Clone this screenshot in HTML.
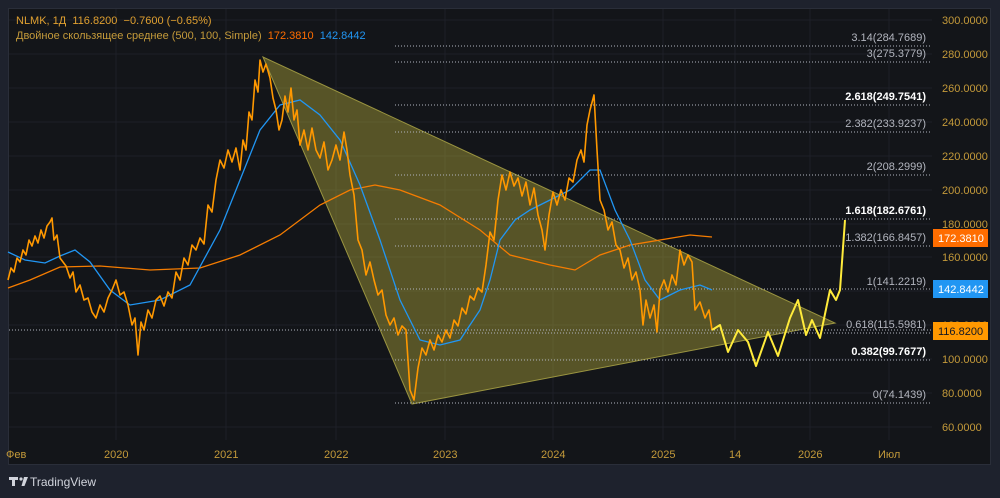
<!DOCTYPE html><html><head><style>
body{margin:0;width:1000px;height:498px;background:#1e222d;overflow:hidden;font-family:"Liberation Sans",sans-serif}
#p{position:absolute;left:8px;top:8px;width:983px;height:457px;background:#131519;border:1px solid #2a2e39;box-sizing:border-box}
.t{position:absolute;font-size:11px;white-space:nowrap}
</style></head><body>
<div id="p"></div>
<svg width="1000" height="498" style="position:absolute;left:0;top:0">
<g stroke="#1e2027" stroke-width="1">
<line x1="116" y1="9" x2="116" y2="440"/><line x1="226" y1="9" x2="226" y2="440"/><line x1="336" y1="9" x2="336" y2="440"/><line x1="445" y1="9" x2="445" y2="440"/><line x1="553" y1="9" x2="553" y2="440"/><line x1="663" y1="9" x2="663" y2="440"/><line x1="735" y1="9" x2="735" y2="440"/><line x1="810" y1="9" x2="810" y2="440"/><line x1="889" y1="9" x2="889" y2="440"/>
<line x1="9" y1="20" x2="932" y2="20"/><line x1="9" y1="54" x2="932" y2="54"/><line x1="9" y1="88" x2="932" y2="88"/><line x1="9" y1="122" x2="932" y2="122"/><line x1="9" y1="156" x2="932" y2="156"/><line x1="9" y1="190" x2="932" y2="190"/><line x1="9" y1="224" x2="932" y2="224"/><line x1="9" y1="257" x2="932" y2="257"/><line x1="9" y1="291" x2="932" y2="291"/><line x1="9" y1="325" x2="932" y2="325"/><line x1="9" y1="359" x2="932" y2="359"/><line x1="9" y1="393" x2="932" y2="393"/><line x1="9" y1="427" x2="932" y2="427"/>
</g>
<polygon points="263,57 412,404 835,323" fill="rgba(190,180,60,0.4)" stroke="#9a9440" stroke-width="1"/>
<g stroke="#b2b5be" stroke-width="1" stroke-dasharray="1,2">
<line x1="395" y1="46" x2="932" y2="46"/><line x1="395" y1="62" x2="932" y2="62"/><line x1="395" y1="105" x2="932" y2="105"/><line x1="395" y1="132" x2="932" y2="132"/><line x1="395" y1="175" x2="932" y2="175"/><line x1="395" y1="219" x2="932" y2="219"/><line x1="395" y1="246" x2="932" y2="246"/><line x1="395" y1="289" x2="932" y2="289"/><line x1="395" y1="333" x2="932" y2="333"/><line x1="395" y1="360" x2="932" y2="360"/><line x1="395" y1="403" x2="932" y2="403"/><line x1="9" y1="330" x2="932" y2="330"/>
</g>
<polyline fill="none" stroke="#f57c00" stroke-width="1.3" points="8,288 30,280 60,267 100,266 150,270 200,268 240,255 280,235 320,205 350,190 375,185 400,190 440,205 480,230 510,255 550,265 575,270 600,255 630,245 660,240 690,235 712,237"/>
<polyline fill="none" stroke="#2196f3" stroke-width="1.3" points="8,252 25,260 45,263 60,256 75,250 90,262 110,290 130,305 160,300 190,285 220,230 240,180 260,130 280,105 300,100 320,115 340,140 360,185 380,240 400,300 420,340 440,345 460,340 480,310 490,280 500,240 515,220 530,210 550,200 570,190 590,170 600,170 615,210 630,240 645,280 660,300 680,290 700,285 712,290"/>
<polyline fill="none" stroke="#ff9800" stroke-width="1.6" stroke-linejoin="round" points="8,280 11,268 14,272 17,258 20,262 23,250 26,255 29,240 32,246 35,236 38,243 41,230 44,238 47,226 50,222 52,218 54,240 57,235 60,258 63,262 66,266 70,278 73,272 76,292 80,285 84,300 88,298 92,312 96,318 100,305 104,312 108,298 112,290 116,280 120,295 124,292 128,305 132,325 135,318 138,355 141,322 144,330 148,310 152,318 156,300 160,296 164,306 168,292 172,298 176,272 180,280 184,258 188,265 192,245 196,250 200,238 204,244 208,205 212,212 216,180 220,160 224,168 228,150 232,162 236,148 240,170 243,140 246,150 249,112 252,120 255,80 258,92 260,60 263,72 266,64 270,78 273,98 276,110 279,130 282,120 285,96 288,112 291,88 294,120 297,110 300,145 304,130 308,150 312,128 316,150 320,158 324,142 328,170 332,160 336,145 340,160 344,132 347,150 350,175 354,195 358,240 362,250 366,275 370,262 374,280 378,295 382,290 386,315 390,325 394,318 398,335 402,326 406,330 410,390 414,400 418,368 422,348 426,355 430,340 434,350 438,335 442,342 446,330 450,338 454,320 458,326 462,308 466,314 470,296 474,300 478,288 482,292 486,265 490,232 494,240 498,200 502,175 506,190 510,172 514,186 518,178 522,196 526,182 530,205 534,188 538,215 542,230 545,250 549,215 553,192 557,205 561,190 565,200 569,178 573,182 577,160 581,150 584,162 587,125 590,110 594,95 597,150 600,200 604,210 608,230 612,222 616,245 620,250 624,268 628,258 632,280 636,272 640,290 643,325 646,300 650,318 654,305 657,332 660,290 664,280 668,292 672,275 676,285 680,250 684,265 688,255 692,262 695,310 700,302 705,318 709,310 712,330"/>
<polyline fill="none" stroke="#ffeb3b" stroke-width="2" stroke-linejoin="round" points="712,330 720,325 728,352 738,330 748,342 756,366 768,332 778,356 790,318 798,300 806,335 812,320 820,338 830,290 836,300 840,290 845,220"/>
<g font-family="Liberation Sans" font-size="11" fill="#c49a3a">
<text x="942" y="24">300.0000</text><text x="942" y="58">280.0000</text><text x="942" y="92">260.0000</text><text x="942" y="126">240.0000</text><text x="942" y="160">220.0000</text><text x="942" y="194">200.0000</text><text x="942" y="228">180.0000</text><text x="942" y="261">160.0000</text><text x="942" y="329">120.0000</text><text x="942" y="363">100.0000</text><text x="942" y="397">80.0000</text><text x="942" y="431">60.0000</text>
<text x="6" y="458">Фев</text><text x="104" y="458">2020</text><text x="214" y="458">2021</text><text x="324" y="458">2022</text><text x="433" y="458">2023</text><text x="541" y="458">2024</text><text x="651" y="458">2025</text><text x="729" y="458">14</text><text x="798" y="458">2026</text><text x="878" y="458">Июл</text>
</g>
<g font-family="Liberation Sans" font-size="11" text-anchor="end" fill="#b2b5be">
<text x="926" y="41">3.14(284.7689)</text><text x="926" y="57">3(275.3779)</text><text x="926" y="100" fill="#fff" font-weight="bold">2.618(249.7541)</text><text x="926" y="127">2.382(233.9237)</text><text x="926" y="170">2(208.2999)</text><text x="926" y="214" fill="#fff" font-weight="bold">1.618(182.6761)</text><text x="926" y="241">1.382(166.8457)</text><text x="926" y="285">1(141.2219)</text><text x="926" y="328">0.618(115.5981)</text><text x="926" y="355" fill="#fff" font-weight="bold">0.382(99.7677)</text><text x="926" y="398">0(74.1439)</text>
</g>
<rect x="933" y="229" width="55" height="18" fill="#ff6d00"/><text x="938" y="242" font-family="Liberation Sans" font-size="11" fill="#fff">172.3810</text>
<rect x="933" y="280" width="55" height="18" fill="#2196f3"/><text x="938" y="293" font-family="Liberation Sans" font-size="11" fill="#fff">142.8442</text>
<rect x="933" y="322" width="55" height="18" fill="#ff9800"/><text x="938" y="335" font-family="Liberation Sans" font-size="11" fill="#131722">116.8200</text>
<g fill="#d1d4dc"><path d="M9,477h9v3h-3v6h-3v-6h-3z"/><circle cx="21" cy="479" r="1.6"/><path d="M24,477h4l-3.5,9h-3z"/></g>
<text x="30" y="486" font-family="Liberation Sans" font-size="12" fill="#d1d4dc">TradingView</text>
</svg>
<div class="t" style="left:16px;top:15px;color:#e0a030">NLMK, 1Д&nbsp; 116.8200&nbsp; −0.7600 (−0.65%)</div>
<div class="t" style="left:16px;top:30px;color:#c49a3a">Двойное скользящее среднее (500, 100, Simple)&nbsp; <span style="color:#ff6d00">172.3810</span>&nbsp; <span style="color:#2196f3">142.8442</span></div>
</body></html>
